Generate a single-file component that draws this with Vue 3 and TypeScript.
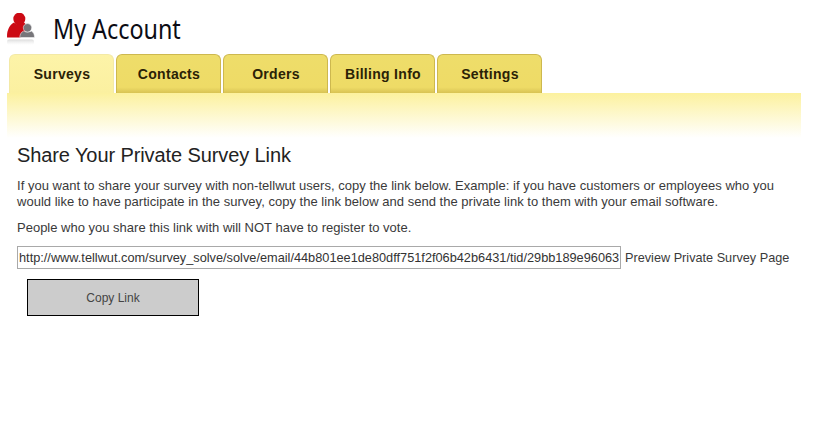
<script setup lang="ts">
const tabs: string[] = ['Surveys', 'Contacts', 'Orders', 'Billing Info', 'Settings']
const surveyLink = 'http://www.tellwut.com/survey_solve/solve/email/44b801ee1de80dff751f2f06b42b6431/tid/29bb189e96063'
</script>

<template>
  <div class="page">
    <header class="title">
      <svg class="logo" width="30" height="34" viewBox="0 0 30 34">
        <defs>
          <linearGradient id="fade" x1="0" y1="0" x2="0" y2="1">
            <stop offset="0" stop-color="#c4c4c4" stop-opacity="0.6" />
            <stop offset="1" stop-color="#e4e4e4" stop-opacity="0" />
          </linearGradient>
        </defs>
        <rect x="0" y="26.500" width="27" height="5.500" rx="2" fill="url(#fade)" />
        <ellipse cx="12.300" cy="6" rx="6" ry="6.300" fill="#cc0a14" />
        <path d="M7 9.500c1.500 2.500 8 2.500 10 0 2 1.500 3 3.500 3.500 6L14 24.500H0.100c-0.500-6 2-12.500 6.900-15z" fill="#cc0a14" />
        <path d="M16.500 18c1 1.300 6.800 1.300 7.800 0 2 1 3.200 3.300 3.200 6v.500H12.800v-.500c0-2.700 1.700-5 3.700-6z" fill="#77767a" stroke="#fff" stroke-width="0.500" />
        <circle cx="20.500" cy="14.800" r="4.200" fill="#77767a" stroke="#fff" stroke-width="0.500" />
      </svg>
      <h1>My Account</h1>
    </header>

    <nav class="tabs">
      <a v-for="(tab, i) in tabs" :key="tab" class="tab" :class="{ active: i === 0 }">{{ tab }}</a>
    </nav>
    <div class="band"></div>

    <main class="content">
      <h2>Share Your Private Survey Link</h2>
      <p class="intro">
        If you want to share your survey with non-tellwut users, copy the link below. Example: if you have customers or employees who you would like to have participate in the survey, copy the link below and send the private link to them with your email software.
      </p>
      <p class="note">People who you share this link with will NOT have to register to vote.</p>
      <div class="link-row">
        <input class="link-input" type="text" :value="surveyLink" readonly />
        <a class="preview">Preview Private Survey Page</a>
      </div>
      <button class="copy" type="button">Copy Link</button>
    </main>
  </div>
</template>

<style scoped>
.page {
  width: 817px;
  height: 439px;
  overflow: hidden;
  background: #fff;
  font-family: "Liberation Sans", Arial, sans-serif;
  color: #3a3a3a;
}

.title {
  display: flex;
  align-items: flex-start;
  height: 54px;
  padding-left: 7px;
  box-sizing: border-box;
}

.logo {
  margin-top: 13px;
}

h1 {
  margin: 10px 0 0 16px;
  font-family: "Noto Sans", sans-serif;
  font-size: 28px;
  font-weight: 400;
  line-height: 36px;
  color: #0c0c14;
  transform: scaleX(0.833);
  transform-origin: left;
}

.tabs {
  display: flex;
  gap: 2px;
  padding-left: 9px;
  height: 39px;
}

.tab {
  width: 105px;
  height: 39px;
  box-sizing: border-box;
  display: flex;
  align-items: center;
  justify-content: center;
  padding-left: 1px;
  border: 1px solid #cdb84f;
  border-bottom: none;
  border-radius: 6px 6px 0 0;
  background: linear-gradient(#eedd6a, #eedb66 85%, #d8c354);
  font-size: 14px;
  font-weight: 700;
  letter-spacing: 0.3px;
  color: #2a2206;
}

.tab.active {
  border-color: #f3e9a6;
  background: linear-gradient(#fdf3a8, #fbf0a0);
}

.band {
  width: 794px;
  height: 45px;
  margin-left: 7px;
  background: linear-gradient(#fcf19e, #fff);
}

.content {
  padding: 6px 17px 0;
}

h2 {
  margin: 0;
  font-size: 20px;
  font-weight: 400;
  line-height: 22px;
  letter-spacing: -0.1px;
  color: #222;
}

p {
  margin: 0;
  font-size: 13px;
  line-height: 15px;
}

.intro {
  margin-top: 12px;
  width: 780px;
  line-height: 16px;
  letter-spacing: 0.02px;
}

.note {
  margin-top: 10px;
}

.link-row {
  display: flex;
  align-items: center;
  gap: 4px;
  margin-top: 11px;
  white-space: nowrap;
}

.link-input {
  width: 604px;
  height: 23px;
  box-sizing: border-box;
  padding: 0 1px;
  border: 1px solid #a9a9a9;
  font-family: inherit;
  font-size: 12.76px;
  color: #333;
  outline: none;
}

.preview {
  font-size: 12.7px;
}

.copy {
  display: block;
  width: 172px;
  height: 37px;
  margin: 10px 0 0 10px;
  border: 1px solid #000;
  background: #ccc;
  font-family: inherit;
  font-size: 12px;
  color: #444;
}
</style>
